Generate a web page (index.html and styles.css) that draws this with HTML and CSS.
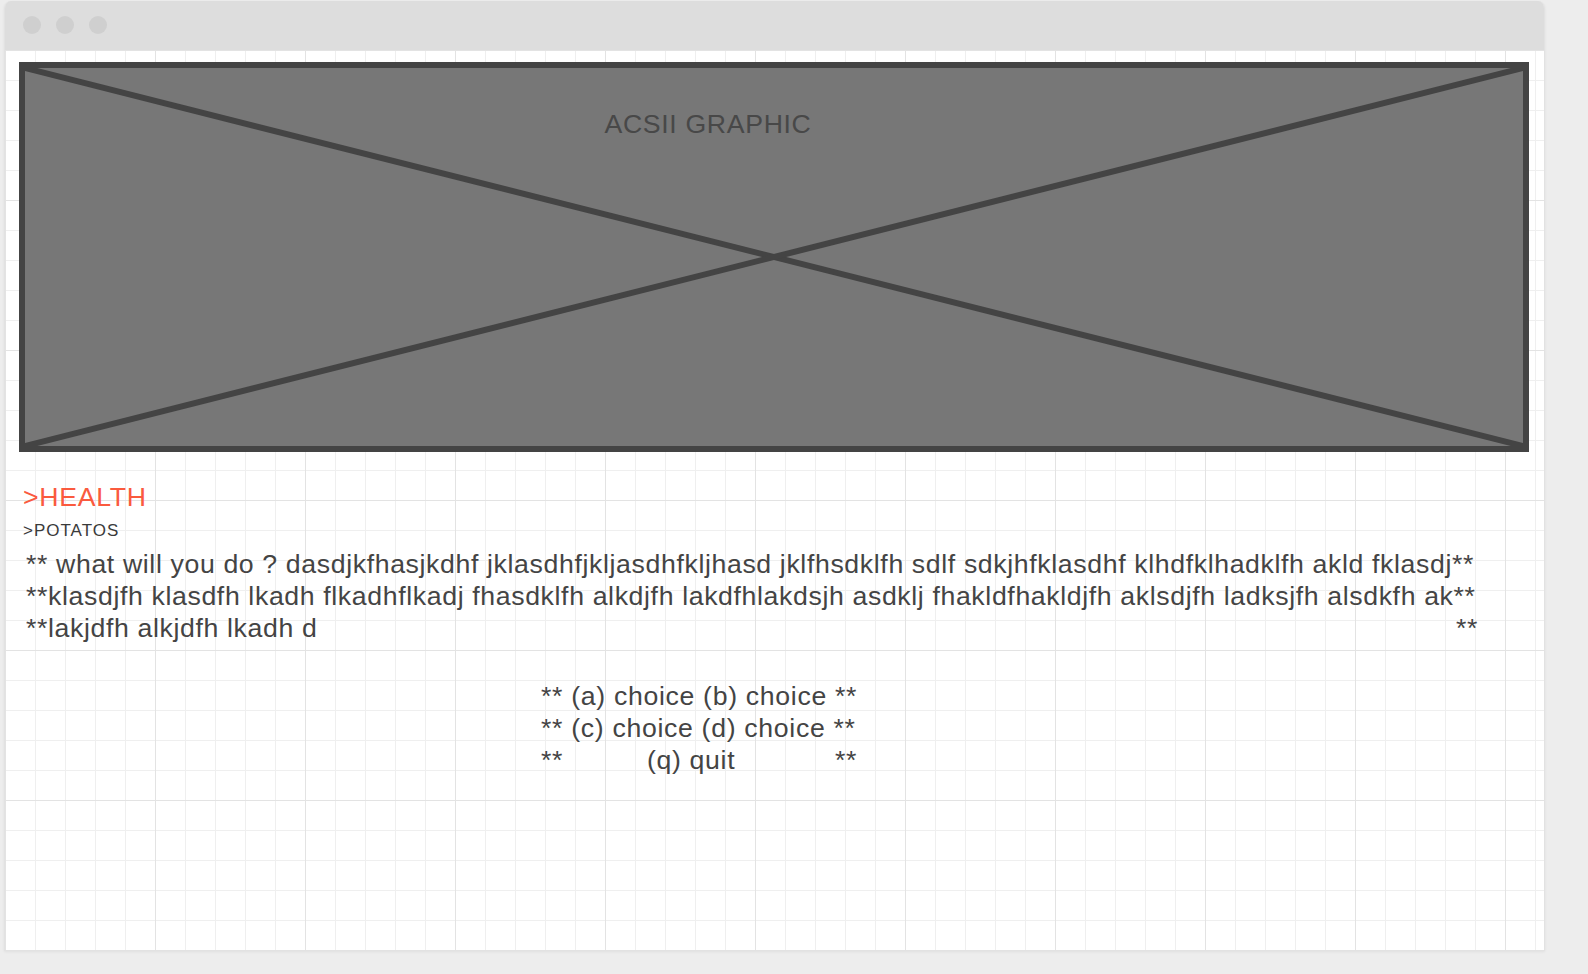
FILE: index.html
```html
<!DOCTYPE html>
<html lang="en">
<head>
<meta charset="utf-8">
<title>Text adventure wireframe</title>
<link rel="stylesheet" href="styles.css">
</head>
<body>
<div class="window">
  <div class="titlebar">
    <span class="dot"></span><span class="dot"></span><span class="dot"></span>
  </div>
  <div class="canvas">
    <div class="placeholder">
      <svg class="cross" viewBox="0 0 100 100" preserveAspectRatio="none">
        <line x1="0" y1="0" x2="100" y2="100" vector-effect="non-scaling-stroke"/>
        <line x1="100" y1="0" x2="0" y2="100" vector-effect="non-scaling-stroke"/>
      </svg>
      <div class="ph-label">ACSII GRAPHIC</div>
    </div>
    <div class="stat-health">&gt;HEALTH</div>
    <div class="stat-item">&gt;POTATOS</div>
    <div class="story">
      <div class="story-line">** what will you do ? dasdjkfhasjkdhf jklasdhfjkljasdhfkljhasd jklfhsdklfh sdlf sdkjhfklasdhf klhdfklhadklfh akld fklasdj**</div>
      <div class="story-line">**klasdjfh klasdfh lkadh flkadhflkadj fhasdklfh alkdjfh lakdfhlakdsjh asdklj fhakldfhakldjfh aklsdjfh ladksjfh alsdkfh ak**</div>
      <div class="story-line story-last"><span>**lakjdfh alkjdfh lkadh d</span><span>**</span></div>
    </div>
    <div class="choices">
      <div class="choice-line">** (a) choice (b) choice **</div>
      <div class="choice-line">** (c) choice (d) choice **</div>
      <div class="choice-line choice-quit"><span>**</span><span class="quit">(q) quit</span><span>**</span></div>
    </div>
  </div>
</div>
</body>
</html>
```

FILE: styles.css
```css
html, body {
  margin: 0;
  padding: 0;
}
body {
  background: #ededed;
  font-family: "Liberation Sans", Arial, sans-serif;
  height: 974px;
  overflow: hidden;
}
.window {
  margin: 1px 0 0 4px;
  width: 1541px;
  box-sizing: border-box;
  border: 1px solid #e2e2e2;
  border-top: none;
  border-radius: 7px 7px 0 0;
  box-shadow: 0 1px 3px rgba(0, 0, 0, 0.06);
  overflow: hidden;
}
.titlebar {
  height: 49px;
  background: #dddddd;
  display: flex;
  align-items: center;
  gap: 15px;
  padding-left: 18px;
  box-sizing: border-box;
}
.dot {
  width: 18px;
  height: 18px;
  border-radius: 50%;
  background: #cfcfcf;
  margin-top: -1px;
}
.canvas {
  height: 900px;
  box-sizing: border-box;
  padding: 12px 0 0 14px;
  background-color: #ffffff;
  background-image:
    linear-gradient(to right, #e3e3e3 1px, transparent 1px),
    linear-gradient(to bottom, #e3e3e3 1px, transparent 1px),
    linear-gradient(to right, #efefef 1px, transparent 1px),
    linear-gradient(to bottom, #efefef 1px, transparent 1px);
  background-size: 150px 150px, 150px 150px, 30px 30px, 30px 30px;
  background-position: 0 0;
}
.placeholder {
  position: relative;
  width: 1510px;
  height: 390px;
  box-sizing: border-box;
  border: 6px solid #444444;
  background: #777777;
}
.cross {
  position: absolute;
  inset: 0;
  width: 100%;
  height: 100%;
}
.cross line {
  stroke: #444444;
  stroke-width: 6;
}
.ph-label {
  position: relative;
  padding-top: 43px;
  padding-right: 132px;
  text-align: center;
  font-size: 26.67px;
  line-height: 1;
  color: #484848;
  letter-spacing: 0.66px;
}
.stat-health {
  margin: 32px 0 0 4px;
  font-size: 26.67px;
  line-height: 27px;
  color: #fa5a3e;
  letter-spacing: 0.7px;
}
.stat-item {
  margin: 11px 0 0 4px;
  font-size: 17px;
  line-height: 17px;
  color: #3a3a3a;
  letter-spacing: 1px;
}
.story {
  margin: 9px 0 0 7px;
  width: 1452px;
  font-size: 26.67px;
  line-height: 32px;
  color: #444444;
  letter-spacing: 0.63px;
}
.story-line {
  white-space: nowrap;
}
.story-last {
  display: flex;
  justify-content: space-between;
}
.choices {
  margin: 36px 0 0 522px;
  width: fit-content;
  font-size: 26.67px;
  line-height: 32px;
  color: #444444;
  letter-spacing: 0.68px;
}
.choice-line {
  white-space: nowrap;
}
.choice-quit {
  display: flex;
  justify-content: space-between;
}
.quit {
  padding-right: 16px;
}
```
